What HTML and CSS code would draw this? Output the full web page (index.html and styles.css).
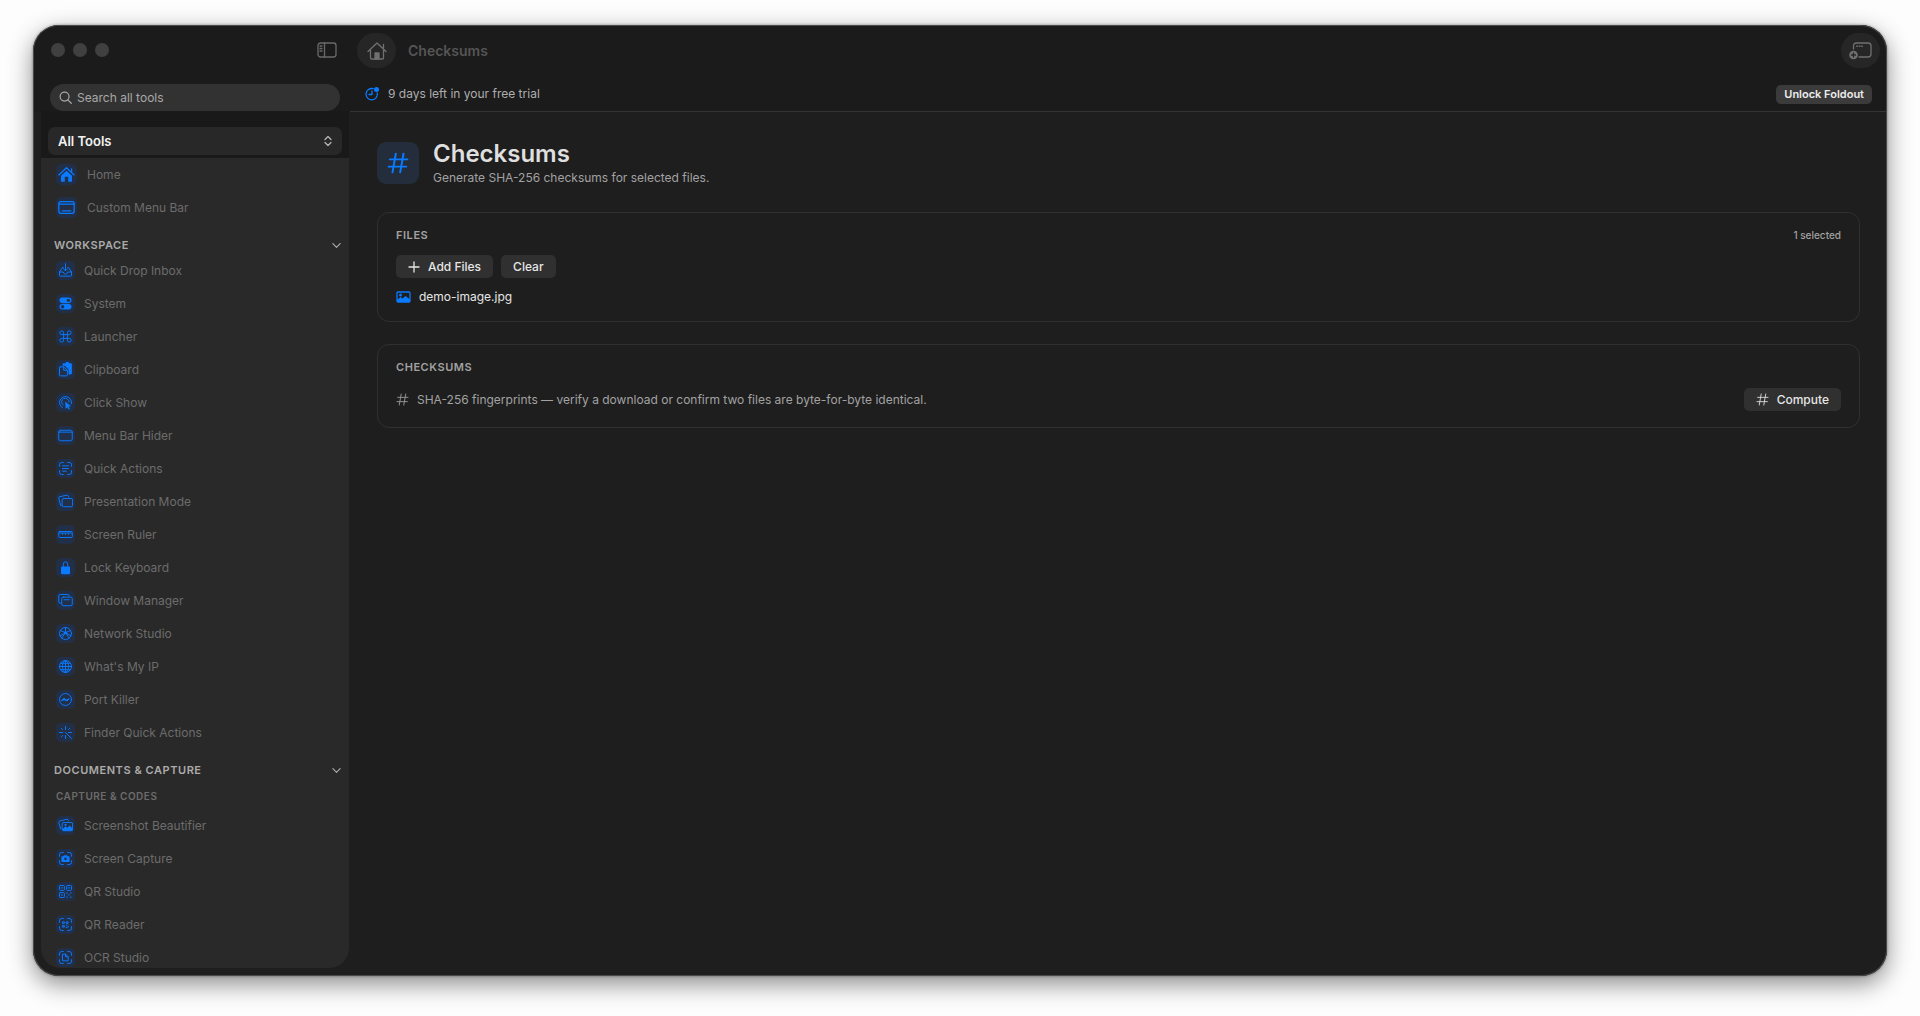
FILE: index.html
```html
<!DOCTYPE html>
<html lang="en">
<head>
    <meta charset="UTF-8">
    <title>Checksums</title>
    <link rel="stylesheet" href="styles.css">
</head>
<body>
    <!-- Icon set -->
    <svg class="icon-set" viewBox="0 0 20 20">
        <symbol id="i-hash" viewBox="0 0 20 20"><path d="M8 1.500 5 18.500M15 1.500 12 18.500M2.500 6.700H18.500M1.500 13.300H17.500"/></symbol>
        <symbol id="i-home" viewBox="0 0 20 20"><path d="M1 10.500 10 2l9 8.500M16 7.500V3.500" /><path class="solid-only" d="M10 5.500 3.500 11.500v6q0 1 1 1H8v-6h4v6h3.500q1 0 1-1v-6z"/></symbol>
        <symbol id="i-dock" viewBox="0 0 20 20"><rect x="1" y="3" width="18" height="14" rx="2.500"/><path d="M1 6h18M5 14h10"/></symbol>
        <symbol id="i-tray" viewBox="0 0 20 20"><path d="M7 6H6L2 12v4.500q0 1 1 1h14q1 0 1-1V12l-4-6h-1M2 12h5q1 3 3 3t3-3h5M10 1v9M7 7.500l3 3 3-3"/></symbol>
        <symbol id="i-switch" viewBox="0 0 20 20"><rect class="solid-only" x="2" y="2" width="16" height="7.500" rx="3.700"/><rect class="solid-only" x="2" y="10.500" width="16" height="7.500" rx="3.700"/><circle class="hole" cx="13.800" cy="5.700" r="2.200"/><circle class="hole" cx="6.200" cy="14.300" r="2.200"/></symbol>
        <symbol id="i-command" viewBox="0 0 20 20"><path d="M7.500 7.500V5A2.500 2.500 0 1 0 5 7.500h10A2.500 2.500 0 1 0 12.500 5v10a2.500 2.500 0 1 0 2.500-2.500H5A2.500 2.500 0 1 0 7.500 15z"/></symbol>
        <symbol id="i-clipboard" viewBox="0 0 20 20"><path class="solid-only" d="M6 5V3q0-1.500 1.500-1.500H10L11 0h3l1 1.500h2q1.500 0 1.500 1.500v12q0 1.500-1.500 1.500h-3V10L9 5z"/><path d="M3 6.500h4.500L12.500 11v6.500q0 1-1 1h-8q-1.500 0-1.500-1V7.500q0-1 1-1zM7.500 6.500V11h5"/></symbol>
        <symbol id="i-click" viewBox="0 0 20 20"><path d="M6 17A8 8 0 1 1 17.800 12M7 13.500A5 5 0 1 1 14.800 9.500"/><path class="solid-only" d="m9.500 8.500 8 6.500-3.200.3 1.700 3.200-1.800.9-1.500-3.200-2.500 2.300z"/></symbol>
        <symbol id="i-menubar" viewBox="0 0 20 20"><rect x="1" y="3" width="18" height="14" rx="2.500"/><path d="M1 5.500h18"/></symbol>
        <symbol id="i-corners" viewBox="0 0 20 20"><path d="M2 7V5q0-3 3-3h2M13 2h2q3 0 3 3v2M18 13v2q0 3-3 3h-2M7 18H5q-3 0-3-3v-2"/></symbol>
        <symbol id="i-textscan" viewBox="0 0 20 20"><use href="#i-corners"/><path d="M6 6.500h8M6 10h8M6 13.500h5"/></symbol>
        <symbol id="i-stack" viewBox="0 0 20 20"><path d="M4.500 15.500H3.500L1 5.500Q.8 4 2.500 3.500L12.500 1.500q1.500 0 2 2.500"/><rect x="5.500" y="6" width="14" height="11" rx="2"/></symbol>
        <symbol id="i-ruler" viewBox="0 0 20 20"><rect x="1" y="6" width="18" height="8" rx="1"/><path d="M2 8h16M6 9v1M10 9v1M14 9v1"/></symbol>
        <symbol id="i-lock" viewBox="0 0 20 20"><rect class="solid-only" x="4" y="8.500" width="12" height="10.500" rx="1.500"/><path d="M7 9V5.500a3 3 0 0 1 6 0V9"/></symbol>
        <symbol id="i-windows" viewBox="0 0 20 20"><path d="M4 13.500H3q-2 0-2-2V4q0-2 2-2h10q2 0 2 2"/><rect x="5" y="5.500" width="14" height="11.500" rx="2"/><path d="M8 9h7"/></symbol>
        <symbol id="i-network" viewBox="0 0 20 20"><circle cx="10" cy="10" r="8"/><path d="M10 2v7L3 6M10 9l7-3M10 9l-5 7M10 9l5 7M3 13l7-4 7 4"/><circle class="solid-only" cx="10" cy="9" r="2"/></symbol>
        <symbol id="i-globe" viewBox="0 0 20 20"><circle cx="10" cy="10" r="8"/><ellipse cx="10" cy="10" rx="4" ry="8"/><path d="M10 2v16M2 10h16M3.500 5.700h13M3.500 14.300h13"/></symbol>
        <symbol id="i-port" viewBox="0 0 20 20"><circle cx="10" cy="10" r="8"/><path class="solid" d="m5 11 3-2.500 3 2 4-1.500-3 3-3-1.500z"/></symbol>
        <symbol id="i-rays" viewBox="0 0 20 20"><path d="M10 2v4M10 14v4M2 10h4M14 10h4M4.500 4.500 6 6M15.500 4.500 14 6M4.500 15.500 6 14M10 10l8 8"/></symbol>
        <symbol id="i-photos" viewBox="0 0 20 20"><path d="M3.500 14.500 1 6Q.8 4.500 2.500 4L12 1.500q1.500 0 2 2"/><rect x="5.500" y="6" width="14" height="11" rx="2"/><path class="solid-only" d="m6 17v-2.500l4-3.500 2.500 2 3-3 4 4v3z"/><circle class="solid-only" cx="10" cy="9" r="1.500"/></symbol>
        <symbol id="i-camscan" viewBox="0 0 20 20"><use href="#i-corners"/><path class="solid-only" d="M4.500 8q0-1 1-1H7l1-1.500h4L13 7h1.500q1 0 1 1v5.500q0 1-1 1h-9q-1 0-1-1z"/><circle class="hole" cx="10" cy="10.500" r="1.700"/></symbol>
        <symbol id="i-qr" viewBox="0 0 20 20"><rect x="2" y="2" width="6.500" height="6.500" rx="1"/><rect x="11.500" y="2" width="6.500" height="6.500" rx="1"/><rect x="2" y="11.500" width="6.500" height="6.500" rx="1"/><path d="M4.500 5.200H6M14 5.200h1.500M4.500 14.700H6M11.500 12h1M16.500 12h1M14 14.700h1M11.500 17.500h1M16.500 17.500h1"/></symbol>
        <symbol id="i-qrscan" viewBox="0 0 20 20"><use href="#i-corners"/><path d="M6.500 6.500h2v2h-2zM11.500 6.500h2v2h-2zM6.500 11.500h2v2h-2zM11 11h1M13 13h1M11 14h1"/></symbol>
        <symbol id="i-docscan" viewBox="0 0 20 20"><use href="#i-corners"/><path d="M6.500 5.500H10l3.500 3.500v5.500h-7zM10 5.500V9h3.500"/></symbol>
        <symbol id="i-chevron" viewBox="0 0 10 10"><path d="m1 3 4 4 4-4"/></symbol>
    </svg>

    <div class="window">
        <aside class="sidebar">
            <div class="sidebar-top">
                <div class="titlebar">
                    <div class="lights"><span></span><span></span><span></span></div>
                    <button class="toggle" aria-label="Toggle sidebar">
                        <svg viewBox="0 0 20 16"><rect x="1" y="1" width="18" height="14" rx="2.500"/><path d="M7.500 1v14M3 4h2M3 6.500h2M3 9h2"/></svg>
                    </button>
                </div>
                <label class="search">
                    <svg viewBox="0 0 14 14"><circle cx="6" cy="6" r="4.800"/><path d="m9.500 9.500 3.700 3.700"/></svg>
                    <input type="text" placeholder="Search all tools" aria-label="Search all tools">
                </label>
            </div>
            <div class="panel">
                <div class="filter">
                    <select aria-label="Tool group">
                        <option>All Tools</option>
                    </select>
                    <svg viewBox="0 0 8 12"><path d="m1 4.500 3-3 3 3M1 7.500l3 3 3-3"/></svg>
                </div>
                <nav class="tools">
                    <a class="tool main-tool" href="#"><svg class="tile"><use href="#i-home"/></svg>Home</a>
                    <a class="tool main-tool" href="#"><svg class="tile"><use href="#i-dock"/></svg>Custom Menu Bar</a>

                    <button class="group">WORKSPACE<svg><use href="#i-chevron"/></svg></button>
                    <a class="tool" href="#"><svg class="tile"><use href="#i-tray"/></svg>Quick Drop Inbox</a>
                    <a class="tool" href="#"><svg class="tile"><use href="#i-switch"/></svg>System</a>
                    <a class="tool" href="#"><svg class="tile"><use href="#i-command"/></svg>Launcher</a>
                    <a class="tool" href="#"><svg class="tile"><use href="#i-clipboard"/></svg>Clipboard</a>
                    <a class="tool" href="#"><svg class="tile"><use href="#i-click"/></svg>Click Show</a>
                    <a class="tool" href="#"><svg class="tile"><use href="#i-menubar"/></svg>Menu Bar Hider</a>
                    <a class="tool" href="#"><svg class="tile"><use href="#i-textscan"/></svg>Quick Actions</a>
                    <a class="tool" href="#"><svg class="tile"><use href="#i-stack"/></svg>Presentation Mode</a>
                    <a class="tool" href="#"><svg class="tile"><use href="#i-ruler"/></svg>Screen Ruler</a>
                    <a class="tool" href="#"><svg class="tile"><use href="#i-lock"/></svg>Lock Keyboard</a>
                    <a class="tool" href="#"><svg class="tile"><use href="#i-windows"/></svg>Window Manager</a>
                    <a class="tool" href="#"><svg class="tile"><use href="#i-network"/></svg>Network Studio</a>
                    <a class="tool" href="#"><svg class="tile"><use href="#i-globe"/></svg>What's My IP</a>
                    <a class="tool" href="#"><svg class="tile"><use href="#i-port"/></svg>Port Killer</a>
                    <a class="tool" href="#"><svg class="tile"><use href="#i-rays"/></svg>Finder Quick Actions</a>

                    <button class="group">DOCUMENTS &amp; CAPTURE<svg><use href="#i-chevron"/></svg></button>
                    <h3 class="subgroup">CAPTURE &amp; CODES</h3>
                    <a class="tool" href="#"><svg class="tile"><use href="#i-photos"/></svg>Screenshot Beautifier</a>
                    <a class="tool" href="#"><svg class="tile"><use href="#i-camscan"/></svg>Screen Capture</a>
                    <a class="tool" href="#"><svg class="tile"><use href="#i-qr"/></svg>QR Studio</a>
                    <a class="tool" href="#"><svg class="tile"><use href="#i-qrscan"/></svg>QR Reader</a>
                    <a class="tool" href="#"><svg class="tile"><use href="#i-docscan"/></svg>OCR Studio</a>
                </nav>
            </div>
        </aside>

        <main class="content">
            <header class="header">
                <div class="toolbar">
                    <button class="round" aria-label="Home">
                        <svg viewBox="0 0 20 18"><path d="M1 9.500 10 1l9 8.500M3.500 8v8q0 1 1 1h11q1 0 1-1V8M16.500 6V2.500"/><path class="solid" d="M8 17v-6h4v6z"/></svg>
                    </button>
                    <span class="window-title">Checksums</span>
                    <button class="round" aria-label="New window">
                        <svg viewBox="0 0 23 18"><path d="M4.500 7V4q0-3 3-3h11.500q3 0 3 3v8q0 3-3 3H10M7.500 4.200h1M10 4.200h1M12.500 4.200h1"/><circle class="solid-only" cx="4.500" cy="13" r="4.300"/><path class="cut" d="M2.500 13h4M4.500 11v4"/></svg>
                    </button>
                </div>
                <div class="trial">
                    <svg viewBox="0 0 14 14"><path d="M8.200 1.700A5.700 5.700 0 1 0 12.300 6M7 4v3.500H4"/><circle class="solid-only" cx="11.500" cy="2.500" r="2.500"/></svg>
                    <span>9 days left in your free trial</span>
                    <button class="unlock">Unlock Foldout</button>
                </div>
            </header>

            <div class="page">
                <div class="page-head">
                    <svg class="page-icon"><use href="#i-hash"/></svg>
                    <div>
                        <h1>Checksums</h1>
                        <p>Generate SHA-256 checksums for selected files.</p>
                    </div>
                </div>

                <section class="card files">
                    <div class="card-head">
                        <h2>FILES</h2>
                        <span class="selected">1 selected</span>
                    </div>
                    <div class="actions">
                        <button class="btn"><svg viewBox="0 0 12 12"><path d="M6 1v10M1 6h10"/></svg>Add Files</button>
                        <button class="btn">Clear</button>
                    </div>
                    <div class="file">
                        <svg viewBox="0 0 15 12"><rect x="1" y="1" width="13" height="10" rx="1"/><path class="solid-only" d="m1 11V9l3.500-3 2 1.500L9.500 5 14 8.500V11z"/><circle class="solid-only" cx="4.500" cy="4" r="1.500"/></svg>
                        <span>demo-image.jpg</span>
                    </div>
                </section>

                <section class="card">
                    <div class="card-head">
                        <h2>CHECKSUMS</h2>
                    </div>
                    <div class="compute">
                        <svg><use href="#i-hash"/></svg>
                        <p>SHA-256 fingerprints — verify a download or confirm two files are byte-for-byte identical.</p>
                        <button class="btn"><svg><use href="#i-hash"/></svg>Compute</button>
                    </div>
                </section>
            </div>
        </main>
    </div>
</body>
</html>
```

FILE: styles.css
```css
* {
    box-sizing: border-box;
}

body {
    margin: 0;
    height: 100vh;
    padding: 25px 33px 40px;
    background: #fdfdfd;
    color: #dfdfdf;
    font-family: Inter, "Liberation Sans", sans-serif;
    font-size: 12px;
    line-height: 16px;
    overflow: hidden;
}

h1, h2, h3, p {
    margin: 0;
}

button, input, select {
    border: none;
    margin: 0;
    padding: 0;
    background: none;
    color: inherit;
    font: inherit;
}

a {
    color: inherit;
    text-decoration: none;
}

svg {
    flex: none;
    fill: none;
    stroke: currentColor;
    stroke-width: 1.3;
    stroke-linecap: round;
    stroke-linejoin: round;
}

.solid {
    fill: currentColor;
}

.solid-only {
    fill: currentColor;
    stroke: none;
}

.hole {
    fill: #212f48;
    stroke: none;
}

.cut {
    stroke: #262626;
}

.icon-set {
    display: none;
}

.window {
    display: flex;
    height: 100%;
    border-radius: 26px;
    background: #1e1e1e;
    box-shadow: inset 0 0 0 1px #4a4a4a, 0 0 3px rgba(0, 0, 0, 0.4), 0 8px 24px rgba(0, 0, 0, 0.45);
    overflow: hidden;
}

/* Sidebar */
.sidebar {
    display: flex;
    flex-direction: column;
    width: 317px;
    flex: none;
}

.sidebar-top {
    height: 86px;
    margin: 1px 0 -1px 1px;
    background: #1b1b1b;
    border-top-left-radius: 25px;
    padding: 0 10px 0 16px;
}

.titlebar {
    display: flex;
    align-items: center;
    justify-content: space-between;
    height: 48px;
    padding: 0 3px 0 1px;
}

.lights {
    display: flex;
    gap: 8px;
}

.lights span {
    width: 14px;
    height: 14px;
    border-radius: 50%;
    background: #404040;
}

.toggle {
    display: flex;
    color: #6a6a6a;
}

.toggle svg {
    width: 20px;
    height: 16px;
}

.search {
    display: flex;
    align-items: center;
    gap: 5px;
    height: 27px;
    margin-top: 10px;
    padding: 0 9px;
    border-radius: 14px;
    background: #323232;
    color: #a8a8a8;
}

.search svg {
    width: 13px;
    height: 13px;
}

.search input {
    flex: 1;
    outline: none;
}

.search input::placeholder {
    color: #a8a8a8;
}

.panel {
    flex: 1;
    display: flex;
    flex-direction: column;
    min-height: 0;
    margin: 0 1px 8px 8px;
    border-radius: 0 0 20px 20px;
    background: #292929;
    overflow: hidden;
}

.filter {
    position: relative;
    padding: 16px 7px 3px;
    background: #191919;
}

.filter select {
    display: block;
    width: 100%;
    height: 28px;
    padding: 0 10px;
    border-radius: 7px;
    background: #282828;
    color: #f2f2f2;
    font-size: 13px;
    font-weight: 600;
    appearance: none;
}

.filter svg {
    position: absolute;
    top: 24px;
    right: 17px;
    width: 8px;
    height: 12px;
    color: #b5b5b5;
}

.tools {
    flex: 1;
    min-height: 0;
    overflow: hidden;
}

.tool {
    display: flex;
    align-items: center;
    gap: 9px;
    height: 33px;
    padding-left: 15px;
    color: #6c6c6c;
}

.tile {
    width: 19px;
    height: 19px;
    padding: 2px;
    border-radius: 5px;
    background: #212f48;
    color: #0a7aff;
    stroke-width: 1.3;
}

.main-tool {
    gap: 10px;
}

.main-tool .tile {
    width: 21px;
    height: 21px;
    stroke-width: 1.5;
}

.group {
    display: flex;
    align-items: center;
    justify-content: space-between;
    width: 100%;
    height: 18px;
    margin-top: 12px;
    padding: 0 8px 0 13px;
    color: #ababab;
    font-size: 11px;
    font-weight: 600;
    letter-spacing: 0.05em;
}

.group svg {
    width: 9px;
    height: 9px;
}

.subgroup {
    margin: 8px 0 4px;
    padding-left: 15px;
    color: #6c6c6c;
    font-size: 10px;
    font-weight: 600;
    line-height: 18px;
    letter-spacing: 0.05em;
}

/* Content */
.content {
    flex: 1;
    min-width: 0;
}

.header {
    height: 87px;
    margin: 0 1px 0 0;
    border-bottom: 1px solid #343434;
    border-top-right-radius: 25px;
    background: #1b1b1b;
    box-shadow: inset 0 1px 0 #4a4a4a;
}

.toolbar {
    display: flex;
    align-items: center;
    gap: 12px;
    padding: 8px 6px 0 7px;
}

.round {
    display: flex;
    align-items: center;
    justify-content: center;
    width: 39px;
    height: 35px;
    border-radius: 18px;
    background: #262626;
    color: #707070;
}

.round svg {
    width: 20px;
    height: 18px;
}

.window-title {
    flex: 1;
    color: #555555;
    font-size: 14px;
    font-weight: 600;
}

.toolbar .round:last-child svg {
    width: 23px;
}

.trial {
    display: flex;
    align-items: center;
    gap: 9px;
    height: 20px;
    margin-top: 16px;
    padding: 0 14px 0 15px;
    color: #adadad;
}

.trial span {
    flex: 1;
}

.trial svg {
    width: 14px;
    height: 14px;
    color: #0a7aff;
}

.unlock {
    height: 19px;
    padding: 0 8px;
    border-radius: 5px;
    background: #3b3b3b;
    color: #ececec;
    font-size: 11px;
    font-weight: 600;
    line-height: 19px;
}

.page {
    display: flex;
    flex-direction: column;
    gap: 22px;
    padding: 27px;
}

.page-head {
    display: flex;
    align-items: center;
    gap: 14px;
    height: 48px;
    margin-bottom: 3px;
}

.page-icon {
    width: 42px;
    height: 42px;
    padding: 10px;
    border-radius: 9px;
    background: #232d3c;
    color: #0a7aff;
    stroke-width: 1.8;
}

.page-head h1 {
    font-size: 24px;
    font-weight: 600;
    line-height: 30px;
}

.page-head p {
    line-height: 18px;
    color: #a2a2a2;
}

.card {
    padding: 14px 18px 16px;
    border: 1px solid #303030;
    border-radius: 12px;
}

.card-head {
    display: flex;
    align-items: center;
    justify-content: space-between;
}

.card-head h2 {
    color: #a2a2a2;
    font-size: 11px;
    font-weight: 600;
    line-height: 16px;
    letter-spacing: 0.05em;
}

.selected {
    color: #a2a2a2;
    font-size: 10px;
    font-weight: 500;
}

.actions {
    display: flex;
    gap: 8px;
    margin-top: 12px;
}

.btn {
    display: flex;
    align-items: center;
    gap: 8px;
    height: 23px;
    padding: 0 12px;
    border-radius: 5px;
    background: #303030;
    color: #e6e6e6;
    font-weight: 500;
}

.btn svg {
    width: 12px;
    height: 12px;
}

.file {
    display: flex;
    align-items: center;
    gap: 8px;
    margin-top: 11px;
    color: #e6e6e6;
}

.file svg {
    width: 15px;
    height: 12px;
    color: #0a7aff;
}

.compute {
    display: flex;
    align-items: center;
    gap: 8px;
    margin-top: 13px;
    color: #a2a2a2;
}

.compute p {
    flex: 1;
}

.compute svg {
    width: 13px;
    height: 13px;
}
```
